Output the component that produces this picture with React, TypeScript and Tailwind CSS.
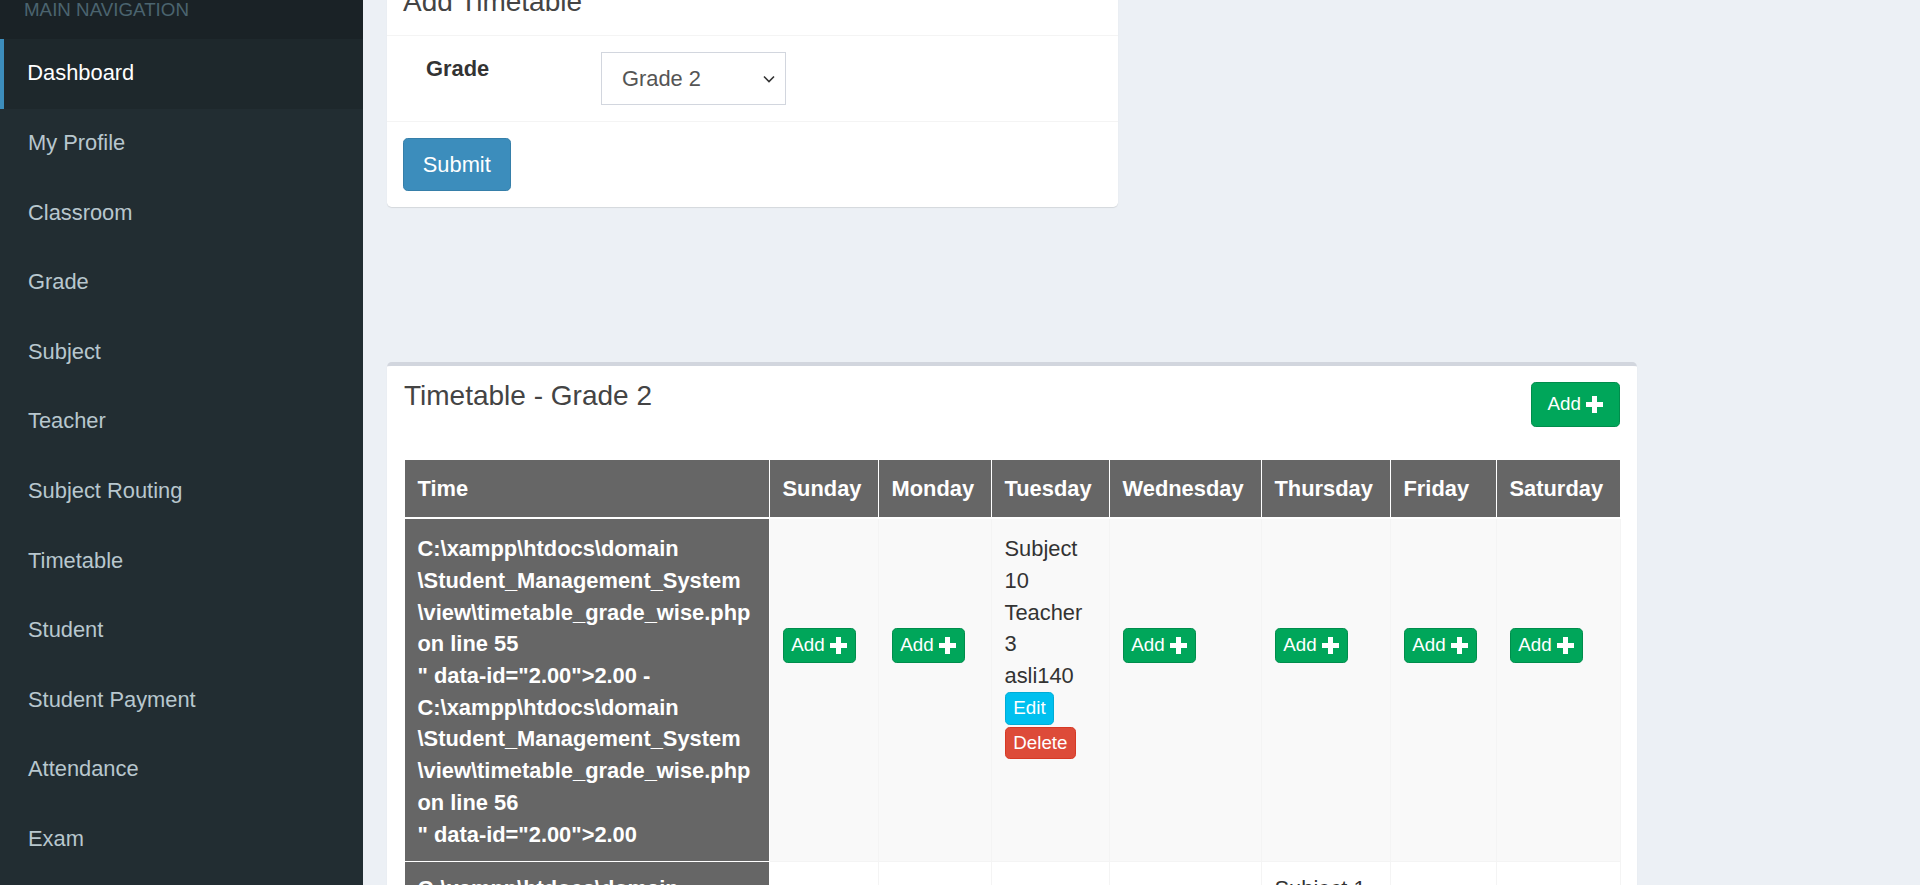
import React from 'react';

const navItems = [
  'Dashboard',
  'My Profile',
  'Classroom',
  'Grade',
  'Subject',
  'Teacher',
  'Subject Routing',
  'Timetable',
  'Student',
  'Student Payment',
  'Attendance',
  'Exam',
];

const days = ['Sunday', 'Monday', 'Tuesday', 'Wednesday', 'Thursday', 'Friday', 'Saturday'];
const colWidths = [365, 109, 113, 118, 152, 129, 106, 124];

function PlusIcon() {
  return (
    <svg width="17" height="17" viewBox="0 0 17 17" fill="currentColor">
      <rect x="6" y="0" width="5" height="17" />
      <rect x="0" y="6" width="17" height="5" />
    </svg>
  );
}

function AddButton({ big = false }: { big?: boolean }) {
  return (
    <button
      className={
        big
          ? 'inline-flex items-center gap-[5.5px] h-[45px] px-[15.6px] rounded-[4.7px] border border-[#008d4c] bg-[#00a65a] text-white text-[18.75px] leading-none'
          : 'inline-flex items-center gap-[5.5px] h-[34.4px] px-[7.8px] rounded-[4.7px] border border-[#008d4c] bg-[#00a65a] text-white text-[18.75px] leading-none'
      }
    >
      Add
      <PlusIcon />
    </button>
  );
}

function timeLines(id: string, line1: number, line2: number) {
  return [
    'C:\\xampp\\htdocs\\domain',
    '\\Student_Management_System',
    '\\view\\timetable_grade_wise.php',
    `on line ${line1}`,
    `" data-id="${id}">${id} -`,
    'C:\\xampp\\htdocs\\domain',
    '\\Student_Management_System',
    '\\view\\timetable_grade_wise.php',
    `on line ${line2}`,
    `" data-id="${id}">${id}`,
  ];
}

type Slot = { subject: string; teacher: string; code: string } | null;

const rows: { id: string; slots: Slot[]; first: boolean }[] = [
  {
    id: '2.00',
    first: true,
    slots: [null, null, { subject: 'Subject 10', teacher: 'Teacher 3', code: 'asli140' }, null, null, null, null],
  },
  {
    id: '3.00',
    first: false,
    slots: [null, null, null, null, { subject: 'Subject 1', teacher: 'Teacher 5', code: 'asli141' }, null, null],
  },
];

export default function App() {
  return (
    <div
      className="flex h-[885px] w-[1920px] overflow-hidden bg-[#ecf0f5] text-[#333]"
      style={{ fontFamily: '"Liberation Sans", Arial, Helvetica, sans-serif' }}
    >
      {/* SIDEBAR */}
      <aside className="w-[363px] shrink-0 bg-[#222d32]">
        <div className="h-[39px] bg-[#1a2226] pl-[24px] text-[18.75px] leading-[19px] text-[#4b646f]">
          MAIN NAVIGATION
        </div>
        {navItems.map((item, i) => (
          <div
            key={item}
            className={
              i === 0
                ? 'flex h-[69.6px] items-center border-l-[4.7px] border-[#3c8dbc] bg-[#1e282c] pl-[23.3px] text-[21.875px] text-white'
                : 'flex h-[69.6px] items-center pl-[28px] text-[21.875px] text-[#b8c7ce]'
            }
          >
            {item}
          </div>
        ))}
      </aside>

      {/* CONTENT */}
      <main className="flex-1 pl-[24px]">
        {/* ADD TIMETABLE */}
        <div className="-mt-[31.6px] w-[731px] rounded-[4.7px] border-t-[4.5px] border-[#d2d6de] bg-white shadow-[0_1px_1px_rgba(0,0,0,0.1)]">
          <div className="border-b border-[#f4f4f4] px-[16px] pt-[15.6px] pb-[19px]">
            <h3 className="text-[28px] leading-[28px] text-[#444]">Add Timetable</h3>
          </div>
          <div className="flex items-start py-[16px] pl-[39px]">
            <div className="w-[175px] pt-[0.5px] text-[21.875px] font-bold leading-[31.25px] text-[#333]">Grade</div>
            <div className="flex h-[52.5px] w-[185px] items-center justify-between border border-[#d2d6de] pl-[20px] pr-[10px] pt-[2px] text-[21.875px] text-[#555]">
              <span>Grade 2</span>
              <svg width="12" height="8" viewBox="0 0 12 8" fill="none" stroke="#333" strokeWidth="1.6">
                <path d="M1 1.5 L6 6.5 L11 1.5" />
              </svg>
            </div>
          </div>
          <div className="border-t border-[#f4f4f4] px-[16px] pt-[16px] pb-[16px]">
            <button className="h-[53px] w-[107.6px] rounded-[4.7px] border border-[#367fa9] bg-[#3c8dbc] pt-[2px] text-[21.875px] text-white">
              Submit
            </button>
          </div>
        </div>

        {/* TIMETABLE */}
        <div className="mt-[155.5px] w-[1250px] rounded-[4.7px] border-t-[4.5px] border-[#d2d6de] bg-white shadow-[0_1px_1px_rgba(0,0,0,0.1)]">
          <div className="flex items-start justify-between px-[17px] pt-[15px]">
            <h3 className="pt-[1px] text-[28px] leading-[28px] text-[#444]">Timetable - Grade 2</h3>
            <div className="pt-[1px]">
              <AddButton big />
            </div>
          </div>

          <div className="px-[17px] pt-[32px]">
            <table className="w-[1216px] table-fixed border-collapse">
              <colgroup>
                {colWidths.map((w, i) => (
                  <col key={i} style={{ width: w }} />
                ))}
              </colgroup>
              <thead>
                <tr>
                  {['Time', ...days].map((d) => (
                    <th
                      key={d}
                      className="border border-b-2 border-white bg-[#666] px-[12.5px] py-[13px] text-left text-[21.875px] font-bold leading-[31.25px] text-white"
                    >
                      {d}
                    </th>
                  ))}
                </tr>
              </thead>
              <tbody>
                {rows.map((row) => (
                  <tr key={row.id} className={row.first ? 'bg-[#f9f9f9]' : 'bg-white'}>
                    <td
                      className={
                        row.first
                          ? 'border border-white bg-[#666] px-[12.5px] pt-[14px] pb-[10.5px] align-top text-[21.875px] font-bold leading-[31.7px] text-white'
                          : 'border border-white bg-[#666] px-[12.5px] pt-[11px] pb-[10.5px] align-top text-[21.875px] font-bold leading-[31.7px] text-white'
                      }
                    >
                      {timeLines(row.id, row.first ? 55 : 57, row.first ? 56 : 58).map((l, i) => (
                        <div key={i} className="whitespace-nowrap">
                          {l}
                        </div>
                      ))}
                    </td>
                    {row.slots.map((slot, i) => (
                      <td
                        key={i}
                        className={
                          row.first
                            ? 'border border-[#f4f4f4] px-[12.5px] pt-[14px] pb-[10.5px] align-top text-[21.875px] leading-[31.7px] text-[#333]'
                            : 'border border-[#f4f4f4] px-[12.5px] pt-[11px] pb-[10.5px] align-top text-[21.875px] leading-[31.7px] text-[#333]'
                        }
                      >
                        {slot ? (
                          <div>
                            <div>{slot.subject}</div>
                            <div>{slot.teacher}</div>
                            <div>{slot.code}</div>
                            <button className="mt-[0.5px] block h-[33px] rounded-[4.7px] border border-[#00acd6] bg-[#00c0ef] px-[7.8px] text-[18.75px] leading-none text-white">
                              Edit
                            </button>
                            <button className="mt-[2px] block h-[32px] rounded-[4.7px] border border-[#d73925] bg-[#dd4b39] px-[7.8px] text-[18.75px] leading-none text-white">
                              Delete
                            </button>
                          </div>
                        ) : (
                          <div className="pt-[95px]">
                            <AddButton />
                          </div>
                        )}
                      </td>
                    ))}
                  </tr>
                ))}
              </tbody>
            </table>
          </div>
        </div>
      </main>
    </div>
  );
}
